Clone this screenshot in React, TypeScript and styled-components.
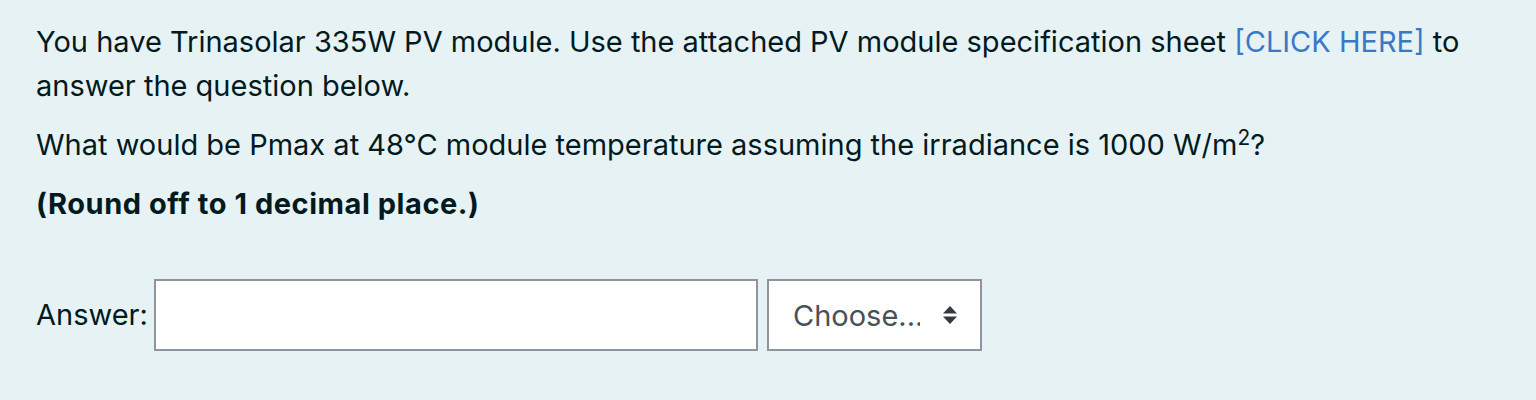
import React, { useState } from 'react';
import styled, { createGlobalStyle } from 'styled-components';

const GlobalStyle = createGlobalStyle`
  html, body {
    margin: 0;
    padding: 0;
    background: #e7f2f5;
  }
`;

const App = () => {
  const [answer, setAnswer] = useState('');
  const [unit, setUnit] = useState('');

  return (
    <>
      <GlobalStyle />
      <Formulation>
        <QuestionText>
          <Para>
            You have Trinasolar 335W PV module. Use the attached PV module specification sheet{' '}
            <Link href="#">[CLICK HERE]</Link> to answer the question below.
          </Para>
          <Para>
            What would be Pmax at 48°C module temperature assuming the irradiance is 1000 W/m
            <sup>2</sup>?
          </Para>
          <Para>
            <strong>(Round off to 1 decimal place.)</strong>
          </Para>
        </QuestionText>
        <AnswerRow>
          <Label htmlFor="answer">Answer:</Label>
          <AnswerInput
            id="answer"
            value={answer}
            onChange={(event) => {
              setAnswer(event.target.value);
            }}
          />
          <SelectWrap>
            <UnitSelect
              value={unit}
              onChange={(event) => {
                setUnit(event.target.value);
              }}
            >
              <option value="">Choose...</option>
              <option value="W">W</option>
              <option value="kW">kW</option>
            </UnitSelect>
            <Arrows width="14" height="18" viewBox="0 0 14 18">
              <path d="M7 0 L14 7.5 H0 Z" fill="#343a40" />
              <path d="M7 18 L14 10.5 H0 Z" fill="#343a40" />
            </Arrows>
          </SelectWrap>
        </AnswerRow>
      </Formulation>
    </>
  );
};

export default App;

// css

const Formulation = styled.div`
  padding: 20px 37px 40px 36px;

  color: #001a1e;
  font-family: Inter, 'Noto Sans', sans-serif;
  font-size: 29px;
  line-height: 44px;
`;

const QuestionText = styled.div`
  display: grid;
  gap: 15px;
`;

const Para = styled.p`
  margin: 0;

  sup {
    font-size: 0.72em;
    line-height: 0;
    vertical-align: 0.5em;
  }

  strong {
    font-weight: 700;
    letter-spacing: 0.55px;
  }
`;

const Link = styled.a`
  color: #3a79c6;
  text-decoration: none;
`;

const AnswerRow = styled.div`
  display: flex;
  align-items: center;
  margin-top: 53px;
`;

const Label = styled.label`
  width: 118px;
`;

const AnswerInput = styled.input`
  box-sizing: border-box;
  width: 604px;
  height: 72px;
  margin-right: 9px;
  border: 2px solid #8f959e;
  border-radius: 0;
  padding: 0 20px;

  background: #fff;

  color: #495057;
  font-family: inherit;
  font-size: 29px;
  outline: none;
`;

const SelectWrap = styled.div`
  position: relative;
  display: flex;
`;

const UnitSelect = styled.select`
  box-sizing: border-box;
  width: 215px;
  height: 72px;
  border: 2px solid #8f959e;
  border-radius: 0;
  padding: 0 60px 0 24px;

  background: #fff;
  appearance: none;

  color: #495057;
  font-family: inherit;
  font-size: 29px;
  outline: none;
`;

const Arrows = styled.svg`
  position: absolute;
  top: 27px;
  right: 25px;
  pointer-events: none;
`;
